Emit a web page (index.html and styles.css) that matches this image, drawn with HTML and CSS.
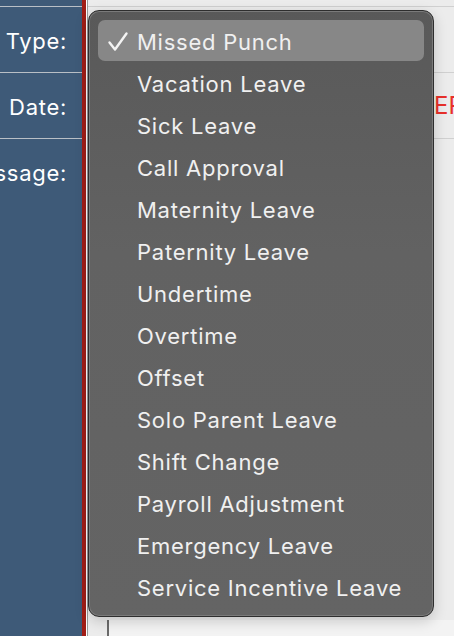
FILE: index.html
```html
<!DOCTYPE html>
<html>
<head>
<meta charset="utf-8">
<link rel="stylesheet" href="styles.css">
</head>
<body>
<div class="app">
  <div class="sidebar">
    <div class="srow top"></div>
    <div class="srow"><span class="label">Type:</span></div>
    <div class="srow"><span class="label">Date:</span></div>
    <div class="srow last"><span class="label">Message:</span></div>
  </div>
  <div class="stripe"></div>
  <div class="main">
    <div class="mrow top"></div>
    <div class="mrow"></div>
    <div class="mrow"><span class="err">ERROR</span></div>
    <div class="mrow grow"><div class="field"></div></div>
  </div>
</div>
<div class="menu">
  <div class="item selected"><svg class="check" width="22" height="22" viewBox="0 0 22 22"><path d="M2.5 11.5 L8 18.5 L19.5 2.5" fill="none" stroke="#f4f4f4" stroke-width="2.4" stroke-linecap="round" stroke-linejoin="round"/></svg>Missed Punch</div>
  <div class="item">Vacation Leave</div>
  <div class="item">Sick Leave</div>
  <div class="item">Call Approval</div>
  <div class="item">Maternity Leave</div>
  <div class="item">Paternity Leave</div>
  <div class="item">Undertime</div>
  <div class="item">Overtime</div>
  <div class="item">Offset</div>
  <div class="item">Solo Parent Leave</div>
  <div class="item">Shift Change</div>
  <div class="item">Payroll Adjustment</div>
  <div class="item">Emergency Leave</div>
  <div class="item">Service Incentive Leave</div>
</div>
</body>
</html>
```
FILE: styles.css
```css
html, body {
  margin: 0;
  padding: 0;
  width: 454px;
  height: 636px;
  overflow: hidden;
  font-family: Inter, "Noto Sans", "Liberation Sans", sans-serif;
}
.app {
  display: flex;
  height: 636px;
}
.sidebar {
  width: 82px;
  flex-shrink: 0;
  background: #3e5a78;
  display: flex;
  flex-direction: column;
  overflow: hidden;
}
.srow {
  height: 65px;
  border-bottom: 1px solid #b9bfc6;
  display: flex;
  align-items: center;
  justify-content: flex-end;
  padding-right: 15px;
  flex-shrink: 0;
}
.srow.top {
  height: 6px;
}
.srow.last {
  border-bottom: none;
}
.label {
  color: #ffffff;
  font-size: 22px;
  letter-spacing: 0.7px;
  white-space: nowrap;
  padding-top: 2px;
}
.stripe {
  width: 4px;
  background: #a11d16;
  border-right: 1px solid #ffffff;
  flex-shrink: 0;
}
.main {
  flex: 1;
  min-width: 0;
  overflow: hidden;
  background: #ececec;
  display: flex;
  flex-direction: column;
  border-left: 1px solid #9a9a9a;
}
.mrow {
  height: 65px;
  border-bottom: 1px solid #d0d0d0;
  display: flex;
  align-items: center;
  flex-shrink: 0;
}
.mrow.top {
  height: 6px;
}
.mrow.grow {
  flex: 1;
  border-bottom: none;
  align-items: stretch;
  padding-left: 19px;
}
.field {
  flex: 1;
  border-left: 2px solid #6a6a6a;
  margin-top: 481px;
  background: #f3f3f3;
}
.err {
  color: #e8302a;
  font-size: 24px;
  padding-left: 346px;
  white-space: nowrap;
}
.menu {
  position: absolute;
  left: 88px;
  top: 10px;
  width: 346px;
  height: 607px;
  background: linear-gradient(#595959, #626262 40%, #646464);
  border: 1px solid #2e2e2e;
  box-shadow: inset 0 0 0 1px #7a7a7a, 0 4px 14px rgba(0,0,0,0.18);
  border-radius: 11px;
  padding: 9px 9px;
  box-sizing: border-box;
  display: flex;
  flex-direction: column;
}
.item {
  height: 42px;
  display: flex;
  align-items: center;
  padding-left: 39px;
  padding-top: 2px;
  box-sizing: border-box;
  color: #f0f0f0;
  font-size: 22px;
  letter-spacing: 0.75px;
  border-radius: 7px;
  position: relative;
  flex-shrink: 0;
}
.item.selected {
  background: #878787;
  height: 41px;
  margin-bottom: 1px;
}
.check {
  position: absolute;
  left: 9px;
  top: 11px;
}
```
